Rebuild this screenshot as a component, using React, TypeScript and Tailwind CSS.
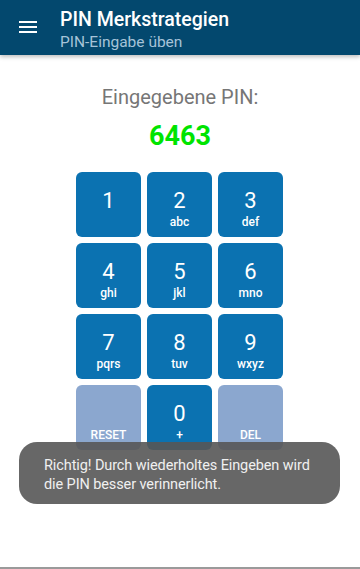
const keys = [
  { n: '1', l: '' },
  { n: '2', l: 'abc' },
  { n: '3', l: 'def' },
  { n: '4', l: 'ghi' },
  { n: '5', l: 'jkl' },
  { n: '6', l: 'mno' },
  { n: '7', l: 'pqrs' },
  { n: '8', l: 'tuv' },
  { n: '9', l: 'wxyz' },
  { n: '', l: 'RESET', muted: true },
  { n: '0', l: '+' },
  { n: '', l: 'DEL', muted: true },
]

export default function App() {
  return (
    <div className="relative w-[360px] h-[569px] bg-white overflow-hidden font-['Roboto',sans-serif]">
      <header className="relative z-10 h-[55px] bg-[#03486e] flex items-center shadow-[0_2px_4px_rgba(0,0,0,0.25)]">
        <div className="w-[55px] flex justify-center">
          <div className="flex flex-col gap-[3px] w-[18px] mt-[-1px]">
            <span className="h-[2px] bg-white" />
            <span className="h-[2px] bg-white" />
            <span className="h-[2px] bg-white" />
          </div>
        </div>
        <div className="flex flex-col leading-none pl-[5px] mt-[5px]">
          <div className="text-white text-[19.5px] font-medium">PIN Merkstrategien</div>
          <div className="text-[#a6c3d8] text-[15.5px] mt-[5px]">PIN-Eingabe üben</div>
        </div>
      </header>

      <main className="flex flex-col items-center">
        <div className="mt-[29px] text-[20px] text-[#767676] leading-[26px]">Eingegebene PIN:</div>
        <div className="mt-[11px] text-[27px] font-bold text-[#00e400] leading-[30px]">6463</div>
        <div className="mt-[21px] grid grid-cols-[repeat(3,65px)] auto-rows-[65px] gap-x-[6px] gap-y-[6px] mr-[1px]">
          {keys.map((k, i) => (
            <div
              key={i}
              className={
                'rounded-[6px] flex flex-col items-center pt-[16px] text-white ' +
                (k.muted ? 'bg-[#8ba7cf]' : 'bg-[#0b72b1]')
              }
            >
              <div className="text-[22px] leading-[26px] h-[26px]">{k.n}</div>
              <div className="text-[12px] font-medium leading-[14px] h-[14px] mt-[1px]">{k.l}</div>
            </div>
          ))}
        </div>
      </main>

      <div className="absolute left-[19px] top-[442px] w-[321px] h-[62px] rounded-[18px] bg-[#575757]/90 flex flex-col justify-center pl-[25px] pt-[3px]">
        <div className="text-[#f0f0f0] text-[14.5px] leading-[19px] tracking-[-0.1px]">
          Richtig! Durch wiederholtes Eingeben wird
          <br />
          die PIN besser verinnerlicht.
        </div>
      </div>

      <div className="absolute left-0 right-0 bottom-0 h-[2px] bg-[#9a9a9a]" />
    </div>
  )
}
